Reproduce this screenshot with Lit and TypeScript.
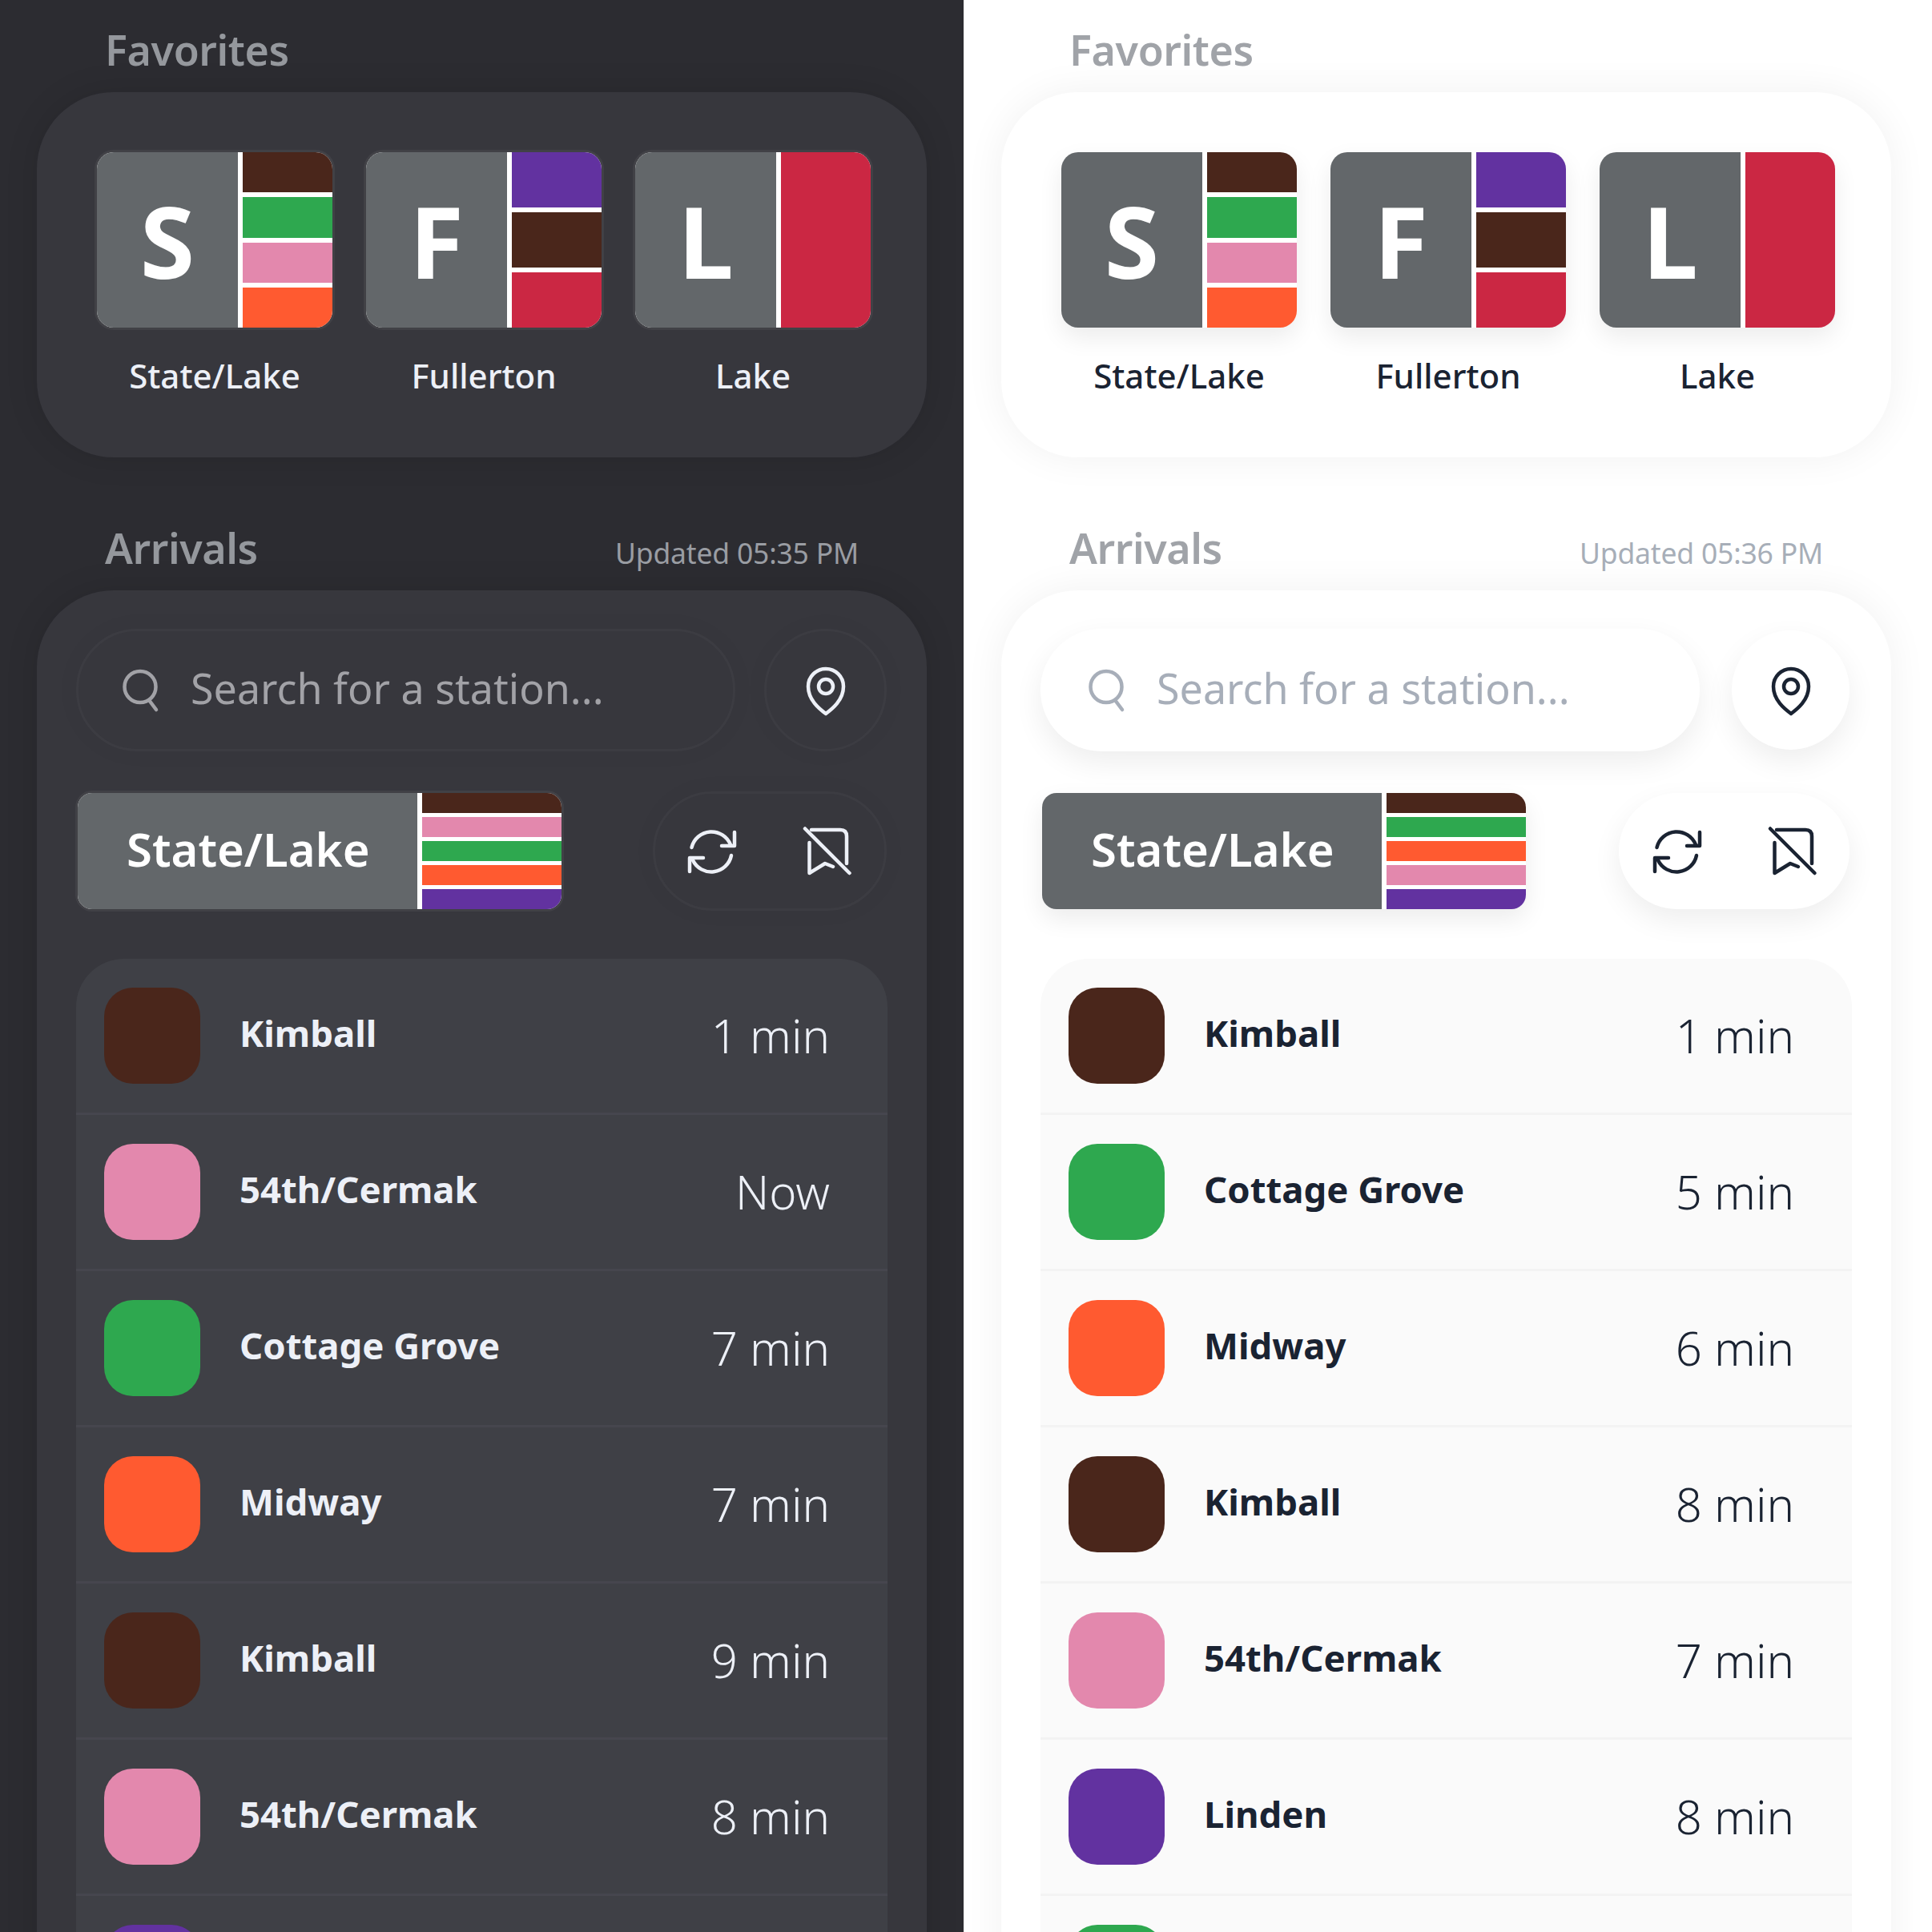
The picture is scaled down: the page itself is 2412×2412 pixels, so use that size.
import { LitElement, html, css, svg } from "lit";
import { customElement, property } from "lit/decorators.js";

const C = { brown: "#4a261b", green: "#2ea84f", pink: "#e388ad", orange: "#ff5a30", purple: "#6232a0", red: "#cb2743" };

interface Data {
  theme: string; updated: string; pill: string[]; rows: [string, string, string][];
}

const DARK: Data = {
  theme: "dark", updated: "Updated 05:35 PM",
  pill: [C.brown, C.pink, C.green, C.orange, C.purple],
  rows: [
    [C.brown, "Kimball", "1 min"], [C.pink, "54th/Cermak", "Now"], [C.green, "Cottage Grove", "7 min"],
    [C.orange, "Midway", "7 min"], [C.brown, "Kimball", "9 min"], [C.pink, "54th/Cermak", "8 min"], [C.purple, "", ""],
  ],
};
const LIGHT: Data = {
  theme: "light", updated: "Updated 05:36 PM",
  pill: [C.brown, C.green, C.orange, C.pink, C.purple],
  rows: [
    [C.brown, "Kimball", "1 min"], [C.green, "Cottage Grove", "5 min"], [C.orange, "Midway", "6 min"],
    [C.brown, "Kimball", "8 min"], [C.pink, "54th/Cermak", "7 min"], [C.purple, "Linden", "8 min"], [C.green, "", ""],
  ],
};
const FAVS: [string, string, string[]][] = [
  ["S", "State/Lake", [C.brown, C.green, C.pink, C.orange]],
  ["F", "Fullerton", [C.purple, C.brown, C.red]],
  ["L", "Lake", [C.red]],
];

const ic = (body: unknown) => html`<svg class="ic" viewBox="0 0 72 72" width="72" height="72">${body}</svg>`;
const searchIcon = ic(svg`<circle cx="35" cy="31.5" r="19.5"/><path d="M46 48 55 60"/>`);
const pinIcon = ic(svg`<path d="M36 65C28 59 14 48 14 31A22 22 0 0 1 58 31C58 48 44 59 36 65Z"/><circle cx="36" cy="31" r="9"/>`);
const refreshIcon = ic(svg`<path d="M11.5 31A25.5 25.5 0 0 1 60 27.5"/><path d="M65 12V29H49"/><path d="M61 41A25.5 25.5 0 0 1 13 47"/><path d="M26 44H9V61"/>`);
const bookmarkOff = ic(svg`<path d="M17 9H53Q61 9 61 17V51"/><path d="M14.5 25V63L34 51 44 55"/><path d="M9 7.5 64.5 63"/>`);

@customElement("train-panel")
export class TrainPanel extends LitElement {
  @property({ type: Object }) data: Data = DARK;
  static styles = css`
    :host { display: block; height: 2412px; overflow: hidden; }
    .panel {
      height: 2412px; overflow: hidden; box-sizing: border-box;
      font-family: "Noto Sans", "Open Sans", sans-serif;
      padding: 23px 0 0 46px; background: var(--bg); color: var(--fg);
    }
    .dark {
      --bg: #2c2c31; --card: #37373d; --list: #3f4046; --div: #46464e; --fg: #edf0f7;
      --head: #95989d; --sub: #9a9da3; --ph: #a2a2a7; --ic: #a2a2a7; --ctl: #37373d;
      --ctl-border: #3c3c42; --shadow: 0 0 40px rgba(0,0,0,.12); --ctl-shadow: 0 0 30px rgba(0,0,0,.04);
      --tile-shadow: 0 0 0 3px rgba(255,255,255,.05);
    }
    .light {
      padding-left: 47px;
      --bg: #ffffff; --card: #ffffff; --list: #fafafa; --div: #f3f3f3; --fg: #1a2332;
      --head: #a0a3a8; --sub: #a7aeb8; --ph: #a7aeb9; --ic: #a7aeb9; --ctl: #ffffff;
      --ctl-border: transparent; --shadow: 0 0 50px rgba(0,0,0,.06); --ctl-shadow: 0 14px 36px rgba(0,0,0,.07);
      --tile-shadow: 0 12px 30px rgba(0,0,0,.08);
    }
    .head { width: 1111px; box-sizing: border-box; display: flex; justify-content: space-between; align-items: baseline; padding: 0 85px; height: 80px; margin-bottom: 12px; }
    .head h2 { margin: 0; font-size: 52px; line-height: 78px; font-weight: 600; color: var(--head); letter-spacing: -.4px; }
    .head span { font-size: 35.5px; color: var(--sub); letter-spacing: -.2px; }
    .card { width: 1111px; background: var(--card); border-radius: 96px; box-shadow: var(--shadow); }
    .favs { display: flex; gap: 42px; height: 456px; box-sizing: border-box; padding: 75px 0 0 75px; margin-bottom: 74px; }
    .fav { width: 294px; display: flex; flex-direction: column; align-items: center; }
    .tile { width: 294px; height: 219px; display: flex; border-radius: 21px; overflow: hidden; background: #fff; box-shadow: var(--tile-shadow); margin-bottom: 35px; flex: none; }
    .letter { width: 176px; background: #63676a; color: #fff; font-weight: 700; font-size: 124px; line-height: 219px; text-align: center; font-family: "Open Sans", sans-serif; }
    .stripes { margin-left: 6px; flex: 1; display: flex; flex-direction: column; gap: 6px; }
    .stripes i { flex: 1; display: block; }
    .fav label { font-size: 42px; font-weight: 500; line-height: 50px; }
    .arr { padding: 48px 0 0 49px; height: 1900px; box-sizing: border-box; }
    .search-row { display: flex; gap: 36px; height: 153px; width: 1012px; align-items: center; }
    .ctl { background: var(--ctl); border: 3px solid var(--ctl-border); box-sizing: border-box; box-shadow: var(--ctl-shadow); }
    .search { width: 823px; height: 153px; border-radius: 76px; display: flex; align-items: center; padding-left: 42px; gap: 26px; }
    .light .search { padding-left: 47px; }
    .search .ic { stroke: var(--ph); }
    .search span { font-size: 52px; color: var(--ph); position: relative; top: -3px; }
    .round { width: 153px; height: 153px; border-radius: 50%; display: flex; align-items: center; justify-content: center; }
    .light .ctl { border: 0; }
    .light .round { width: 147px; height: 149px; margin-left: 4px; }
    .ctl-row { display: flex; justify-content: space-between; align-items: center; height: 149px; margin-top: 50px; padding-left: 2px; width: 1012px; box-sizing: border-box; }
    .light .ctl-row { width: 1010px; }
    .pill { width: 604px; height: 145px; display: flex; border-radius: 18px; overflow: hidden; background: #fff; box-shadow: var(--tile-shadow); }
    .pill .name { width: 424px; background: #63676a; color: #fff; font-size: 58px; font-weight: 600; line-height: 139px; padding-left: 61px; box-sizing: border-box; }
    .pill .stripes { gap: 5px; }
    .actions { width: 292px; height: 149px; border-radius: 75px; display: flex; align-items: center; justify-content: space-between; padding: 0 36px 0 34px; }
    .light .actions { width: 288px; height: 145px; padding: 0 36px 0 36px; }
    .ic { fill: none; stroke: var(--fg); stroke-width: 4.5; stroke-linecap: round; stroke-linejoin: round; display: block; flex: none; }
    .list { width: 1013px; background: var(--list); border-radius: 60px 60px 0 0; margin-top: 60px; }
    .row { height: 195px; box-sizing: border-box; border-bottom: 3px solid var(--div); display: flex; align-items: center; padding: 0 72px 0 35px; }
    .sw { width: 120px; height: 120px; border-radius: 36px; flex: none; }
    .dest { margin-left: 49px; flex: 1; font-size: 45.5px; font-weight: 700; position: relative; top: -4px; }
    .time { font-size: 58px; font-weight: 300; font-family: "Noto Sans", sans-serif; position: relative; top: -1px; }
  `;
  render() {
    const d = this.data;
    const bars = (cs: string[]) => html`<div class="stripes">${cs.map((c) => html`<i style="background:${c}"></i>`)}</div>`;
    return html`<div class="panel ${d.theme}">
      <div class="head"><h2>Favorites</h2></div>
      <div class="card favs">
        ${FAVS.map(([l, n, cs]) => html`<div class="fav"><div class="tile"><div class="letter">${l}</div>${bars(cs)}</div><label>${n}</label></div>`)}
      </div>
      <div class="head"><h2>Arrivals</h2><span>${d.updated}</span></div>
      <div class="card arr">
        <div class="search-row">
          <div class="ctl search">${searchIcon}<span>Search for a station...</span></div>
          <div class="ctl round">${pinIcon}</div>
        </div>
        <div class="ctl-row">
          <div class="pill"><div class="name">State/Lake</div>${bars(d.pill)}</div>
          <div class="ctl actions">${refreshIcon}${bookmarkOff}</div>
        </div>
        <div class="list">
          ${d.rows.map(([c, n, t]) => html`<div class="row"><div class="sw" style="background:${c}"></div><div class="dest">${n}</div><div class="time">${t}</div></div>`)}
        </div>
      </div>
    </div>`;
  }
}

@customElement("app-root")
export class AppRoot extends LitElement {
  static styles = css`
    :host { display: grid; grid-template-columns: 1203px 1209px; height: 2412px; overflow: hidden; }
  `;
  render() {
    return html`<train-panel .data=${DARK}></train-panel><train-panel .data=${LIGHT}></train-panel>`;
  }
}
